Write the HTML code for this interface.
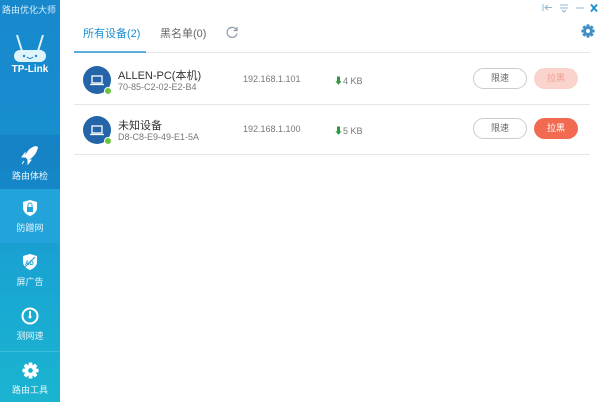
<!DOCTYPE html><html><head><meta charset="utf-8"><style>
*{margin:0;padding:0;box-sizing:border-box}
body{width:600px;height:402px;overflow:hidden;background:#fff;font-family:"Liberation Sans","Noto Sans CJK SC",sans-serif;position:relative}
.side{position:absolute;left:0;top:0;width:60px;height:402px;background:linear-gradient(180deg,#1888cd 0%,#188ecf 35%,#19a6d2 70%,#1ab4d0 100%)}
.title{position:absolute;left:2px;top:3px;font-size:9px;color:#d8eef9;white-space:nowrap}
.nav{position:absolute;left:0;width:60px;height:54px;color:#e6f5fb;font-size:9px;text-align:center;white-space:nowrap}
.nav svg{display:block;margin:10px auto 4px}
.txt{position:absolute;font-size:11px;color:#333;white-space:nowrap}
.grey{color:#777;font-size:9px}
.av{position:absolute;left:83px;width:28px;height:28px;border-radius:50%;background:#2464a8}
.dot{position:absolute;right:-1px;bottom:-1px;width:8px;height:8px;border-radius:50%;background:#6ac53c;border:1.5px solid #fff}
.btn{position:absolute;height:21px;border-radius:11px;font-size:9px;text-align:center;line-height:19px}
.hr{position:absolute;left:74px;width:516px;height:1px;background:#e6e6e6}
</style></head><body>
<svg width="0" height="0" style="position:absolute"><defs><g id="gear"><g fill="currentColor"><rect x="7" y="0.5" width="4" height="17" rx="0.8"/><rect x="7" y="0.5" width="4" height="17" rx="0.8" transform="rotate(45 9 9)"/><rect x="7" y="0.5" width="4" height="17" rx="0.8" transform="rotate(90 9 9)"/><rect x="7" y="0.5" width="4" height="17" rx="0.8" transform="rotate(135 9 9)"/><circle cx="9" cy="9" r="6"/></g></g></defs></svg>
<div class="side">
<div class="title">路由优化大师</div>
<svg style="position:absolute;left:10px;top:33px" width="40" height="30" viewBox="0 0 40 30"><path d="M7 2 L12 18 M33 2 L28 18" stroke="#dff3fb" stroke-width="2"/><rect x="4" y="17" width="32" height="12" rx="6" fill="#dff3fb"/><circle cx="14" cy="23" r="1.2" fill="#1888cd"/><circle cx="26" cy="23" r="1.2" fill="#1888cd"/><path d="M17 24 Q20 27 23 24" stroke="#1888cd" fill="none"/></svg>
<div style="position:absolute;left:0;width:60px;top:64px;text-align:center;color:#fff;font-weight:bold;font-size:10px">TP-Link</div>
<div class="nav" style="top:135px;background:rgba(10,90,170,.25)"><svg width="18" height="20" viewBox="0 0 18 20"><path d="M15 1 C9 2 5 7 4 12 L7 15 C12 13 16 8 17 2Z" fill="#fff"/><path d="M4 12 L1 12 L4 8Z M7 15 L7 19 L10 15Z M3 16 L1 19" fill="#fff" stroke="#fff"/></svg>路由体检</div>
<div class="nav" style="top:189px;background:#22a3d9"><svg width="16" height="18" viewBox="0 0 16 18"><path d="M8 1 L15 3 V9 C15 13 11 16 8 17 C5 16 1 13 1 9 V3Z" fill="#fff"/><rect x="5" y="8" width="6" height="5" fill="#22a3d9"/><path d="M6 8 V6 A2 2 0 0 1 10 6 V8" stroke="#22a3d9" fill="none"/></svg>防蹭网</div>
<div class="nav" style="top:243px"><svg width="16" height="18" viewBox="0 0 16 18"><path d="M8 1 L15 3 V9 C15 13 11 16 8 17 C5 16 1 13 1 9 V3Z" fill="#fff"/><text x="3" y="12" font-size="6" fill="#1aa0d2" font-weight="bold">AD</text><path d="M3 14 L13 4" stroke="#1aa0d2"/></svg>屏广告</div>
<div class="nav" style="top:297px"><svg width="18" height="18" viewBox="0 0 18 18"><circle cx="9" cy="9" r="7.5" stroke="#fff" stroke-width="2" fill="none"/><path d="M9 4 V10" stroke="#fff" stroke-width="2"/><circle cx="9" cy="10" r="1.5" fill="#fff"/></svg>测网速</div>
<div class="nav" style="top:351px;border-top:1px solid rgba(255,255,255,.15);color:#e6f5fb"><svg width="17" height="17" viewBox="0 0 18 18" style="color:#fff"><use href="#gear"/><circle cx="9" cy="9" r="2.5" fill="#1ab0d0"/></svg>路由工具</div>
</div>
<svg style="position:absolute;left:542px;top:3px" width="56" height="10" viewBox="0 0 56 10"><path d="M1 1 V8 M3 4.5 H10 M6 2 L3 4.5 L6 7" stroke="#8fb9d4" fill="none"/><path d="M18 2 H26 M18 5 H26 M20 7 L22 9 L24 7" stroke="#8fb9d4" fill="none"/><path d="M34 5 H42" stroke="#8fb9d4"/><path d="M49 1.5 L55 8.5 M55 1.5 L49 8.5" stroke="#1a8fd0" stroke-width="1.8"/></svg>
<svg style="position:absolute;left:581px;top:24px;color:#3f8fc4" width="14" height="14" viewBox="0 0 18 18"><use href="#gear"/><circle cx="9" cy="9" r="2.5" fill="#fff"/></svg>
<div class="txt" style="left:83px;top:25px;color:#1a8fd0">所有设备(2)</div>
<div class="txt" style="left:160px;top:25px;color:#666">黑名单(0)</div>
<svg style="position:absolute;left:226px;top:26px" width="13" height="13" viewBox="0 0 13 13"><path d="M10.5 4 A5 5 0 1 0 11 7.5" stroke="#8a9aa8" stroke-width="1.2" fill="none"/><path d="M11 1 V4.5 H7.5" stroke="#8a9aa8" stroke-width="1.2" fill="none"/></svg>
<div class="hr" style="top:52px"></div>
<div style="position:absolute;left:74px;top:51px;width:72px;height:2px;background:#1a8fd0;opacity:.7"></div>
<div class="av" style="top:66px"><svg width="28" height="28"><rect x="9" y="10" width="10" height="7" fill="none" stroke="#fff" stroke-width="1.3"/><path d="M7 18.5 H21" stroke="#fff" stroke-width="1.3"/></svg><div class="dot"></div></div>
<div class="txt" style="left:118px;top:67px">ALLEN-PC(本机)</div>
<div class="txt grey" style="left:118px;top:82px">70-85-C2-02-E2-B4</div>
<div class="txt grey" style="left:243px;top:74px">192.168.1.101</div>
<div class="txt grey" style="left:334px;top:74px"><b style="color:#2a9a3c">⬇</b>4 KB</div>
<div class="btn" style="left:473px;top:68px;width:54px;border:1px solid #ccc;color:#666">限速</div>
<div class="btn" style="left:534px;top:68px;width:44px;background:#fad3cc;color:#f1a090;line-height:21px">拉黑</div>
<div class="hr" style="top:104px"></div>
<div class="av" style="top:116px"><svg width="28" height="28"><rect x="9" y="10" width="10" height="7" fill="none" stroke="#fff" stroke-width="1.3"/><path d="M7 18.5 H21" stroke="#fff" stroke-width="1.3"/></svg><div class="dot"></div></div>
<div class="txt" style="left:118px;top:117px">未知设备</div>
<div class="txt grey" style="left:118px;top:132px">D8-C8-E9-49-E1-5A</div>
<div class="txt grey" style="left:243px;top:124px">192.168.1.100</div>
<div class="txt grey" style="left:334px;top:124px"><b style="color:#2a9a3c">⬇</b>5 KB</div>
<div class="btn" style="left:473px;top:118px;width:54px;border:1px solid #ccc;color:#666">限速</div>
<div class="btn" style="left:534px;top:118px;width:44px;background:#f26a50;color:#fff;line-height:21px">拉黑</div>
<div class="hr" style="top:154px"></div>
</body></html>
